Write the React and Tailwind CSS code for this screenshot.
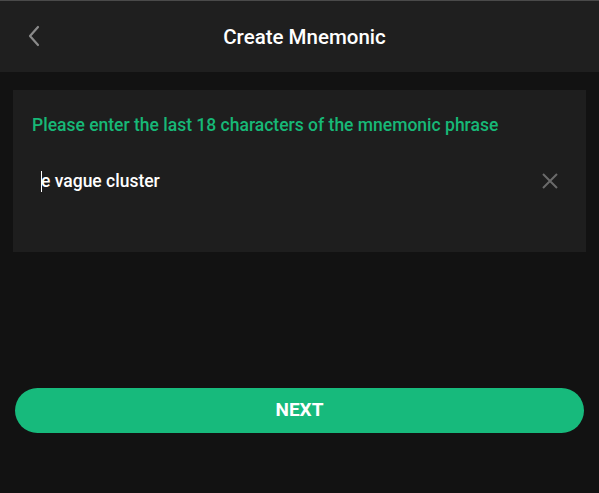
import React from 'react';

export default function App() {
  return (
    <div className="w-[599px] h-[493px] bg-[#121212] flex flex-col" style={{ fontFamily: 'Roboto, "Noto Sans", sans-serif' }}>
      <div className="h-[1px] bg-[#4a4a4a]" />
      <header className="h-[71px] bg-[#1f1f1f] flex items-center relative">
        <button className="absolute left-[26px] top-[23px] text-[#8a8a8a]">
          <svg width="16" height="24" viewBox="0 0 16 24" fill="none">
            <path d="M12 3 L4 12 L12 21" stroke="currentColor" strokeWidth="2.2" strokeLinecap="round" strokeLinejoin="round" />
          </svg>
        </button>
        <h1 className="w-full text-center text-white font-medium text-[20.5px] pt-[2px] pl-[10px]">Create Mnemonic</h1>
      </header>

      <div className="mx-[13px] mt-[18px] h-[162px] bg-[#1e1e1e] flex flex-col">
        <p className="text-[#17b877] font-medium text-[17.5px] ml-[19px] mt-[22px]">
          Please enter the last 18 characters of the mnemonic phrase
        </p>
        <div className="flex items-center justify-between ml-[28px] mr-[27px] mt-[30px]">
          <div className="flex items-center">
            <span className="w-[1px] h-[21px] bg-white mr-[-1px]" />
            <span className="text-white font-medium text-[17.5px]">e vague cluster</span>
          </div>
          <svg width="18" height="18" viewBox="0 0 18 18" className="text-[#6a6a6a]">
            <path d="M2 2 L16 16 M16 2 L2 16" stroke="currentColor" strokeWidth="2" />
          </svg>
        </div>
      </div>

      <div className="mt-[136px] mx-[15px]">
        <button className="w-full h-[45px] rounded-full bg-[#17ba7c] text-white font-bold text-[19px]">
          NEXT
        </button>
      </div>
    </div>
  );
}
